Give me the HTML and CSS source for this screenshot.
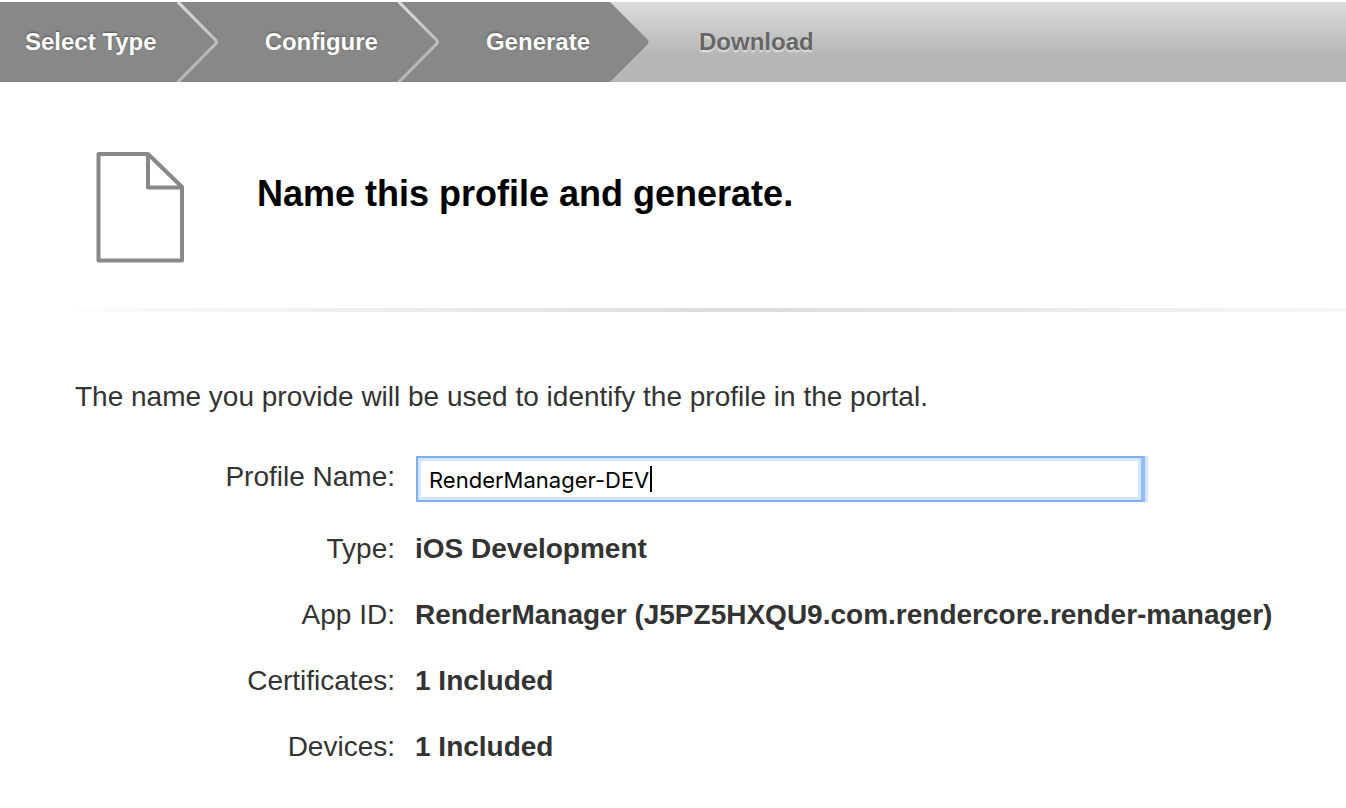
FILE: index.html
```
<!DOCTYPE html>
<html lang="en">
<head>
<meta charset="utf-8">
<meta name="viewport" content="width=device-width, initial-scale=1">
<title>Name this profile and generate</title>
<link rel="stylesheet" href="styles.css">
</head>
<body>
<svg class="defs" aria-hidden="true">
  <defs>
    <linearGradient id="edge" gradientUnits="userSpaceOnUse" x1="0" y1="0" x2="0" y2="80">
      <stop offset="0" stop-color="#dcdcdc"/>
      <stop offset="0.65" stop-color="#b7b7b7"/>
      <stop offset="1" stop-color="#b7b7b7"/>
    </linearGradient>
  </defs>
</svg>
<nav aria-label="Progress">
  <ol class="steps">
    <li class="step done first"><span class="step-name">Select Type</span>
      <svg class="chevron" viewBox="0 0 42 80" aria-hidden="true"><path d="M0 -1L38.500 38Q40.500 40 38.500 42L0 81" fill="none" stroke="url(#edge)" stroke-width="3"/></svg></li>
    <li class="step done"><span class="step-name">Configure</span>
      <svg class="chevron" viewBox="0 0 42 80" aria-hidden="true"><path d="M0 -1L38.500 38Q40.500 40 38.500 42L0 81" fill="none" stroke="url(#edge)" stroke-width="3"/></svg></li>
    <li class="step current" aria-current="step"><span class="step-name">Generate</span>
      <svg class="chevron" viewBox="0 0 42 80" aria-hidden="true"><path d="M0 0H2L39 37Q42 40 39 43L2 80H0Z" fill="#888"/></svg></li>
    <li class="step upcoming"><span class="step-name">Download</span></li>
  </ol>
</nav>
<main class="content">
  <header class="heading">
    <svg class="doc-icon" viewBox="0 0 88 111" aria-hidden="true"><path d="M2.500 2H52L86 35V108.500H2.500ZM52 2V35.500H86" fill="none" stroke="#888" stroke-width="4" stroke-linejoin="round"/></svg>
    <h1 class="title">Name this profile and generate.</h1>
  </header>
  <hr class="divider">
  <p class="intro">The name you provide will be used to identify the profile in the portal.</p>
  <form class="form">
    <div class="row row-input">
      <label class="label" for="profile-name">Profile Name:</label>
      <div class="field">
        <input class="input" id="profile-name" type="text" value="RenderManager-DEV" autocomplete="off" spellcheck="false">
        <span class="caret" aria-hidden="true"></span>
      </div>
    </div>
    <dl class="details">
      <div class="row"><dt class="label">Type:</dt><dd class="value">iOS Development</dd></div>
      <div class="row"><dt class="label">App ID:</dt><dd class="value">RenderManager (J5PZ5HXQU9.com.rendercore.render-manager)</dd></div>
      <div class="row"><dt class="label">Certificates:</dt><dd class="value">1 Included</dd></div>
      <div class="row"><dt class="label">Devices:</dt><dd class="value">1 Included</dd></div>
    </dl>
  </form>
</main>
</body>
</html>
```
FILE: styles.css
```
* {
  box-sizing: border-box;
}

body {
  margin: 0;
  padding-top: 2px;
  background: #fff;
  color: #333;
  font-family: "Liberation Sans", Arial, sans-serif;
  font-size: 28px;
  line-height: 36px;
}

.defs {
  position: absolute;
  width: 0;
  height: 0;
}

.steps {
  display: flex;
  margin: 0;
  padding: 0;
  list-style: none;
  background: linear-gradient(#dcdcdc, #b7b7b7 65%, #b7b7b7);
  font-size: 24px;
  font-weight: bold;
}

.step {
  display: flex;
  align-items: center;
  height: 80px;
  color: #fff;
  text-shadow: 0 -1px 2px rgba(0, 0, 0, 0.4);
}

.step-name {
  flex: 1;
  padding: 22px 20px 22px 46px;
  white-space: nowrap;
}

.first .step-name {
  padding-left: 25px;
}

.done,
.current .step-name {
  background: #888;
}

.current .step-name {
  padding-right: 18px;
}

.upcoming {
  color: #666;
  text-shadow: 0 2px 2px rgba(255, 255, 255, 0.6);
}

.upcoming .step-name {
  padding-left: 49px;
}

.chevron {
  flex: none;
  width: 42px;
  height: 80px;
}

.content {
  padding-left: 75px;
}

.heading {
  display: flex;
  gap: 73px;
  padding: 70px 21px 45px;
}

.doc-icon {
  flex: none;
  width: 88px;
  height: 111px;
}

.title {
  margin: 0;
  padding-top: 20px;
  color: #000;
  font-size: 36px;
  line-height: 44px;
}

.divider {
  height: 4px;
  margin: 0;
  border: 0;
  background: linear-gradient(90deg, #fcfcfc, #dcdcdc 52%, #f7f7f7);
}

.intro {
  margin: 0;
  padding: 67px 0 41px;
}

.row {
  display: grid;
  grid-template-columns: 320px 1fr;
  column-gap: 20px;
  padding-bottom: 30px;
}

.row-input {
  padding-bottom: 29px;
}

.label {
  padding-top: 3px;
  text-align: right;
}

.details {
  margin: 0;
}

.details .label {
  padding-top: 0;
}

.value {
  margin: 0;
  font-weight: bold;
}

.field {
  position: relative;
  width: 80%;
  max-width: 730px;
  padding-left: 1px;
}

.input {
  display: block;
  width: 100%;
  height: 46px;
  padding: 2px 8px 0 11px;
  border: 2px solid #7fb0f3;
  border-right: 4px solid #94bdf7;
  border-radius: 0;
  outline: 0;
  box-shadow: inset 0 0 0 3px #d5e5fb, 3px 0 0 #d5e5fb;
  background: #fff;
  color: #000;
  font-family: Inter, sans-serif;
  font-size: 22px;
}

.caret {
  position: absolute;
  top: 10px;
  left: 235px;
  width: 2px;
  height: 26px;
  background: #000;
}
```
